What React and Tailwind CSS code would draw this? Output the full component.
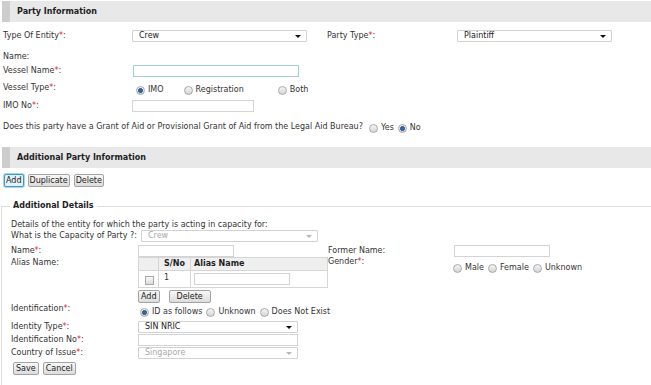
import React from 'react';

// Small form-control pieces, drawn to look like the old IE-style widgets
const Req = () => <span className="text-[#e0202a]">*</span>;

const Radio = ({ checked }) => (
  <span className="inline-flex shrink-0 items-center justify-center w-[9px] h-[9px] rounded-full border border-[#a8a8a8] bg-linear-to-b from-[#f6f6f6] to-[#d4d4d4]">
    {checked && <span className="w-[5px] h-[5px] rounded-full bg-[#2f6db3] border border-[#1a4c86]" />}
  </span>
);

const RadioOpt = ({ checked, label, className = '' }) => (
  <span className={`inline-flex items-center gap-[3px] ${className}`}>
    <Radio checked={checked} />
    <span>{label}</span>
  </span>
);

const Select = ({ value, width, disabled }) => (
  <div
    className={`flex items-center justify-between h-[12px] bg-white border border-[#d2d2d2] rounded-[1px] pl-[6px] pr-[5px] ${
      disabled ? 'text-[#a8a8a8]' : 'text-[#222]'
    } ${width}`}
  >
    <span>{value}</span>
    <span
      className={`w-0 h-0 border-l-[3px] border-r-[3px] border-t-[3px] border-l-transparent border-r-transparent ${
        disabled ? 'border-t-[#b8b8b8]' : 'border-t-[#111]'
      }`}
    />
  </div>
);

const Input = ({ width, focus }) => (
  <div className={`h-[12px] bg-white border ${focus ? 'border-[#9fd0d8]' : 'border-[#d4d4d4]'} ${width}`} />
);

const Btn = ({ children, focus, className = 'px-[2px]' }) => (
  <span
    className={`inline-flex items-center h-[13px] rounded-[2px] border text-[#222] ${className} ${
      focus
        ? 'border-[#3f9ac9] bg-[#e3f1fa] shadow-[0_0_0_1px_#a9d6ef]'
        : 'border-[#a3a3a3] bg-linear-to-b from-[#f8f8f8] to-[#dcdcdc]'
    }`}
  >
    {children}
  </span>
);

const SectionHeader = ({ title, className = '' }) => (
  <div className={`flex h-[21px] ml-[2px] bg-[#e8e8e8] ${className}`}>
    <div className="w-[8px] bg-[#cdcdcd]" />
    <div className="flex items-center pl-[7px] font-bold text-[#1e1e1e]">{title}</div>
  </div>
);

export default function App() {
  return (
    <div
      className="w-[651px] h-[385px] overflow-hidden bg-white text-[8px] leading-[10px] text-[#333]"
      style={{ fontFamily: '"DejaVu Sans", Verdana, sans-serif' }}
    >
      <SectionHeader title="Party Information" className="mt-[1px]" />

      {/* Party information fields */}
      <div className="pl-[3px]">
        <div className="flex items-center h-[12px] mt-[8px]">
          <span className="w-[129px]">Type Of Entity<Req />:</span>
          <Select value="Crew" width="w-[175px]" />
          <span className="ml-[20px] w-[130px]">Party Type<Req />:</span>
          <Select value="Plaintiff" width="w-[155px]" />
        </div>

        <div className="flex items-center h-[10px] mt-[10px]">
          <span>Name:</span>
        </div>

        <div className="flex items-center h-[12px] mt-[3px]">
          <span className="w-[130px]">Vessel Name<Req />:</span>
          <Input width="w-[166px]" focus />
        </div>

        <div className="flex items-start h-[13px] mt-[6px]">
          <span className="w-[133px]">Vessel Type<Req />:</span>
          <div className="flex items-center pt-[2px]">
            <RadioOpt checked label="IMO" />
            <RadioOpt label="Registration" className="ml-[20px]" />
            <RadioOpt label="Both" className="ml-[34px]" />
          </div>
        </div>

        <div className="flex items-center h-[12px] mt-[4px]">
          <span className="w-[129px]">IMO No<Req />:</span>
          <Input width="w-[122px]" />
        </div>

        <div className="flex items-center h-[12px] mt-[9px]">
          <span>Does this party have a Grant of Aid or Provisional Grant of Aid from the Legal Aid Bureau?</span>
          <span className="flex items-center pt-[2px] ml-[6px]">
            <RadioOpt label="Yes" />
            <RadioOpt checked label="No" className="ml-[4px]" />
          </span>
        </div>
      </div>

      <SectionHeader title="Additional Party Information" className="mt-[14px]" />

      <div className="flex items-center gap-[4px] pl-[4px] mt-[6px]">
        <Btn focus className="px-[1px]">Add</Btn>
        <Btn className="px-[1px]">Duplicate</Btn>
        <Btn className="px-[1px]">Delete</Btn>
      </div>

      {/* Additional details fieldset */}
      <fieldset className="mt-[14px] ml-[1px] border-t border-l border-[#dcdcdc] pb-[40px]">
        <legend className="ml-[8px] px-[3px] font-bold text-[#1e1e1e]">Additional Details</legend>

        <div className="pl-[9px]">
          <div className="flex items-center h-[10px] mt-[9px]">
            <span>Details of the entity for which the party is acting in capacity for:</span>
          </div>

          <div className="flex items-center h-[12px]">
            <span className="w-[130px]">What is the Capacity of Party ?:</span>
            <Select value="Crew" width="w-[177px]" disabled />
          </div>

          <div className="flex items-center h-[12px] mt-[3px]">
            <span className="w-[127px]">Name<Req />:</span>
            <Input width="w-[96px]" />
            <span className="ml-[94px] w-[126px]">Former Name:</span>
            <Input width="w-[96px]" />
          </div>

          <div className="flex items-start">
            <span className="w-[127px] pt-[1px]">Alias Name:</span>
            <div className="flex flex-col w-[190px]">
              <table className="w-[190px] border-collapse">
                <tbody>
                  <tr className="h-[13px] bg-[#efefef]">
                    <td className="w-[20px] p-0 border border-[#d6d6d6]" />
                    <td className="w-[32px] p-0 border border-[#d6d6d6] pl-[5px] font-bold text-[#1e1e1e]">S/No</td>
                    <td className="p-0 border border-[#d6d6d6] pl-[3px] font-bold text-[#1e1e1e]">Alias Name</td>
                  </tr>
                  <tr className="h-[17px]">
                    <td className="p-0 border border-[#d6d6d6]">
                      <span className="block ml-[6px] mt-[3px] w-[9px] h-[9px] border border-[#a8a8a8] bg-linear-to-b from-[#fafafa] to-[#dadada]" />
                    </td>
                    <td className="p-0 border border-[#d6d6d6] pl-[5px] align-top pt-[2px]">1</td>
                    <td className="p-0 border border-[#d6d6d6] pl-[3px]">
                      <Input width="w-[96px]" />
                    </td>
                  </tr>
                </tbody>
              </table>
              <div className="flex items-center gap-[9px] mt-[2px]">
                <Btn>Add</Btn>
                <Btn className="px-[7px]">Delete</Btn>
              </div>
            </div>
            <div className="flex items-start">
              <span className="w-[126px]">Gender<Req />:</span>
              <div className="flex items-center pt-[6px] -ml-[1px]">
                <RadioOpt label="Male" />
                <RadioOpt label="Female" className="ml-[4px]" />
                <RadioOpt label="Unknown" className="ml-[4px]" />
              </div>
            </div>
          </div>

          <div className="flex items-start h-[17px] mt-[1px]">
            <span className="w-[129px]">Identification<Req />:</span>
            <div className="flex items-center pt-[3px]">
              <RadioOpt checked label="ID as follows" />
              <RadioOpt label="Unknown" className="ml-[4px]" />
              <RadioOpt label="Does Not Exist" className="ml-[4px]" />
            </div>
          </div>

          <div className="flex items-center h-[12px]">
            <span className="w-[127px]">Identity Type<Req />:</span>
            <Select value="SIN NRIC" width="w-[160px]" />
          </div>

          <div className="flex items-center h-[12px] mt-[1px]">
            <span className="w-[127px]">Identification No<Req />:</span>
            <Input width="w-[160px]" />
          </div>

          <div className="flex items-center h-[12px] mt-[1px]">
            <span className="w-[127px]">Country of Issue<Req />:</span>
            <Select value="Singapore" width="w-[160px]" disabled />
          </div>

          <div className="flex items-center gap-[4px] mt-[3px] ml-[2px]">
            <Btn>Save</Btn>
            <Btn>Cancel</Btn>
          </div>
        </div>
      </fieldset>
    </div>
  );
}
